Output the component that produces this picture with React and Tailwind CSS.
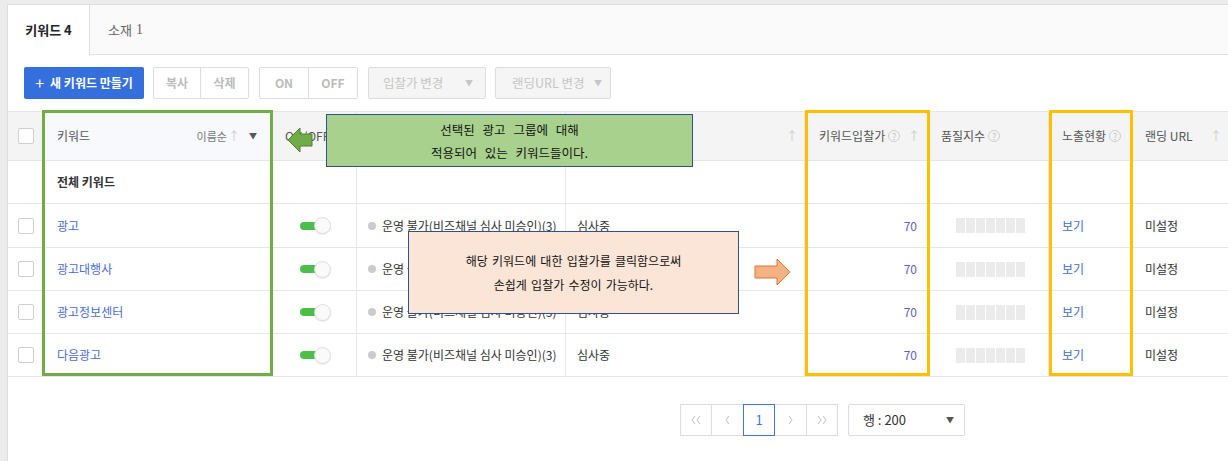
import React from 'react';

const cols = [35, 229, 85, 209, 239, 125, 119, 84, 110];

const keywords = ['광고', '광고대행사', '광고정보센터', '다음광고'];

const Help = () => (
  <span className="ml-[3px] inline-flex w-[12px] h-[12px] rounded-full border border-[#cfcfcf] text-[#c4c4c4] text-[9px] leading-none items-center justify-center font-normal">?</span>
);

const SortUp = ({ className = '' }) => (
  <span className={`text-[#cccccc] text-[12px] leading-none ${className}`}>↑</span>
);

const Checkbox = () => (
  <span className="block w-[16px] h-[16px] border border-[#cfcfcf] rounded-[2px] bg-white" />
);

const Toggle = () => (
  <div className="relative w-[31px] h-[17px] flex items-center">
    <div className="w-[22px] h-[8px] rounded-full bg-[#4cbf4a]" />
    <div className="absolute left-[14px] top-0 w-[17px] h-[17px] rounded-full bg-[#fafafa] border border-[#dddddd] shadow-[0_1px_1px_rgba(0,0,0,0.08)]" />
  </div>
);

const Quality = () => (
  <div className="flex gap-[1px]">
    {[0, 1, 2, 3, 4, 5, 6].map(i => (
      <span key={i} className="block w-[9px] h-[15px] bg-[#ebebeb]" />
    ))}
  </div>
);

// chevrons for pagination: dir -1 = left, 1 = right; double draws two
const Chevron = ({ dir = -1, double = false }) => {
  const one = (x) => dir < 0
    ? `M${x + 3} 1 L${x} 5 L${x + 3} 9`
    : `M${x} 1 L${x + 3} 5 L${x} 9`;
  return (
    <svg width={double ? 11 : 5} height="10" viewBox={double ? '0 0 11 10' : '0 0 5 10'}>
      <path d={double ? `${one(1)} ${one(6)}` : one(1)} fill="none" stroke="#c8c8c8" strokeWidth="1.1" />
    </svg>
  );
};

const Cell = ({ i, className = '', children }) => (
  <div
    className={`shrink-0 h-full border-r border-[#e8e8e8] flex items-center ${className}`}
    style={{ width: cols[i] }}
  >
    {children}
  </div>
);

export default function App() {
  return (
    <div className="relative w-[1228px] h-[461px] overflow-hidden bg-[#ececec] pt-[4px] pl-[7px] font-['Noto_Sans_CJK_KR',sans-serif] text-[#333333]">
      <div className="w-[1240px] h-full bg-white border-l border-t border-[#dedede] flex flex-col">
        {/* tabs */}
        <div className="h-[50px] flex bg-[#fafafa] border-b border-[#e0e0e0]">
          <div className="w-[82px] h-[50px] bg-white border-r border-[#dddddd] flex items-center justify-center text-[13px] font-bold text-[#222]">
            키워드 4
          </div>
          <div className="pl-[18px] flex items-center text-[13px] text-[#666]">
            소재 <span className="ml-[4px] font-['Liberation_Serif',serif] text-[14px] text-[#7a5a4a]">1</span>
          </div>
        </div>

        {/* toolbar */}
        <div className="h-[56px] flex items-center pl-[16px] gap-[9px] text-[12px]">
          <button className="w-[120px] h-[32px] rounded-[2px] bg-[#356fdc] text-white font-bold flex items-center justify-center gap-[6px]">
            <span className="text-[16px] font-normal leading-none -mt-[2px]">+</span>새 키워드 만들기
          </button>
          <div className="flex h-[32px] border border-[#dddddd] rounded-[2px] text-[#bbbbbb] font-bold">
            <span className="w-[47px] flex items-center justify-center border-r border-[#dddddd]">복사</span>
            <span className="w-[47px] flex items-center justify-center">삭제</span>
          </div>
          <div className="flex h-[32px] ml-[1px] border border-[#dddddd] rounded-[2px] text-[#bbbbbb] font-bold">
            <span className="w-[49px] flex items-center justify-center border-r border-[#dddddd]">ON</span>
            <span className="w-[48px] flex items-center justify-center">OFF</span>
          </div>
          <div className="w-[118px] h-[32px] ml-[1px] border border-[#dddddd] rounded-[2px] bg-[#f5f5f5] text-[#c6c6c6] flex items-center pl-[14px] pr-[12px] justify-between text-[12.5px]">
            입찰가 변경 <span className="text-[8px]">▼</span>
          </div>
          <div className="w-[116px] h-[32px] border border-[#dddddd] rounded-[2px] bg-[#f5f5f5] text-[#c6c6c6] flex items-center pl-[16px] pr-[8px] justify-between text-[12.5px]">
            랜딩URL 변경 <span className="text-[8px]">▼</span>
          </div>
        </div>

        {/* header */}
        <div className="h-[50px] flex border-t border-b border-[#e6e6e6] bg-[#f4f4f4] text-[12px] text-[#555]">
          <Cell i={0} className="justify-center pl-[1px]"><Checkbox /></Cell>
          <Cell i={1} className="bg-[#f7f9fd] pl-[14px] pr-[14px] justify-between">
            <span>키워드</span>
            <span className="flex items-center text-[11px] text-[#777]">
              이름순<SortUp className="ml-[1px] text-[#999999]" />
              <span className="ml-[9px] text-[8px] text-[#555]">▼</span>
            </span>
          </Cell>
          <Cell i={2} className="pl-[13px]">ON/OFF</Cell>
          <Cell i={3} />
          <Cell i={4} className="justify-end pr-[6px]"><SortUp /></Cell>
          <Cell i={5} className="pl-[14px] pr-[9px] justify-between">
            <span className="flex items-center">키워드입찰가<Help /></span><SortUp />
          </Cell>
          <Cell i={6} className="pl-[11px]"><span className="flex items-center">품질지수<Help /></span></Cell>
          <Cell i={7} className="pl-[13px]"><span className="flex items-center">노출현황<Help /></span></Cell>
          <Cell i={8} className="pl-[12px] pr-[16px] justify-between border-r-0">
            <span>랜딩 URL</span><SortUp className="mr-[5px]" />
          </Cell>
        </div>

        {/* total row */}
        <div className="h-[43px] flex border-b border-[#e6e6e6] text-[12px]">
          <Cell i={0} />
          <Cell i={1} className="pl-[14px] font-bold text-[#333]">전체 키워드</Cell>
          <Cell i={2} />
          <Cell i={3} />
          <Cell i={4} />
          <Cell i={5} />
          <Cell i={6} />
          <Cell i={7} />
          <Cell i={8} className="border-r-0" />
        </div>

        {keywords.map((k, idx) => (
          <div key={k} className={`${idx === 0 ? 'h-[44px]' : 'h-[43px]'} flex border-b border-[#e6e6e6] text-[12px]`}>
            <Cell i={0} className="justify-center pl-[1px]"><Checkbox /></Cell>
            <Cell i={1} className="pl-[14px] text-[#4a6cd6]">{k}</Cell>
            <Cell i={2} className="pl-[28px]"><Toggle /></Cell>
            <Cell i={3} className="pl-[11px]">
              <span className="w-[8px] h-[8px] rounded-full bg-[#cccccc] mr-[6px]" />
              운영 불가(비즈채널 심사 미승인)(3)
            </Cell>
            <Cell i={4} className="pl-[11px]">심사중</Cell>
            <Cell i={5} className="justify-end pr-[12px] text-[#5b60c9]">70</Cell>
            <Cell i={6} className="pl-[26px]"><Quality /></Cell>
            <Cell i={7} className="pl-[13px] text-[#3f6bd0]">보기</Cell>
            <Cell i={8} className="pl-[12px] border-r-0">미설정</Cell>
          </div>
        ))}

        {/* pagination */}
        <div className="flex items-center pl-[672px] pt-[27px] gap-[10px] text-[13px]">
          <div className="flex h-[32px]">
            <span className="w-[32px] flex items-center justify-center border border-[#dddddd]"><Chevron dir={-1} double /></span>
            <span className="w-[32px] flex items-center justify-center border border-l-0 border-[#dddddd]"><Chevron dir={-1} /></span>
            <span className="w-[32px] flex items-center justify-center border border-[#3a78e0] -ml-px text-[#3a78e0]">1</span>
            <span className="w-[32px] flex items-center justify-center border border-l-0 border-[#dddddd]"><Chevron dir={1} /></span>
            <span className="w-[31px] flex items-center justify-center border border-l-0 border-[#dddddd]"><Chevron dir={1} double /></span>
          </div>
          <div className="w-[117px] h-[32px] border border-[#dddddd] rounded-[2px] flex items-center justify-between pl-[14px] pr-[10px] text-[#333]">
            행 : 200 <span className="text-[8px] text-[#555]">▼</span>
          </div>
        </div>
      </div>

      {/* annotation overlays */}
      <div className="absolute left-[42px] top-[110px] w-[231px] h-[266px] border-[3px] border-[#70ad47]" />
      <div className="absolute left-[805px] top-[110px] w-[125px] h-[266px] border-[3px] border-[#ffc000]" />
      <div className="absolute left-[1049px] top-[110px] w-[84px] h-[266px] border-[3px] border-[#ffc000]" />

      <svg className="absolute left-[286px] top-[125px]" width="28" height="30" viewBox="0 0 28 30">
        <polygon points="2,15 14,3 14,9 26,9 26,21 14,21 14,27" fill="#70ad47" stroke="#507e32" strokeWidth="1" />
      </svg>

      <div className="absolute left-[326px] top-[114px] w-[367px] h-[53px] bg-[#a9d18e] border border-[#2f528f] flex flex-col items-center justify-center text-[12.5px] leading-[23px] text-[#111] [word-spacing:5px]">
        <span>선택된 광고 그룹에 대해</span>
        <span>적용되어 있는 키워드들이다.</span>
      </div>

      <div className="absolute left-[408px] top-[231px] w-[331px] h-[83px] bg-[#fbe5d6] border border-[#2f528f] flex flex-col items-center justify-center text-[12px] leading-[24px] text-[#111] [word-spacing:1.5px]">
        <span>해당 키워드에 대한 입찰가를 클릭함으로써</span>
        <span>손쉽게 입찰가 수정이 가능하다.</span>
      </div>

      <svg className="absolute left-[754px] top-[258px]" width="38" height="30" viewBox="0 0 38 30">
        <polygon points="1,8 23,8 23,1 36,14 23,27 23,20 1,20" fill="#f4b183" stroke="#d9773a" strokeWidth="1" />
      </svg>
    </div>
  );
}
